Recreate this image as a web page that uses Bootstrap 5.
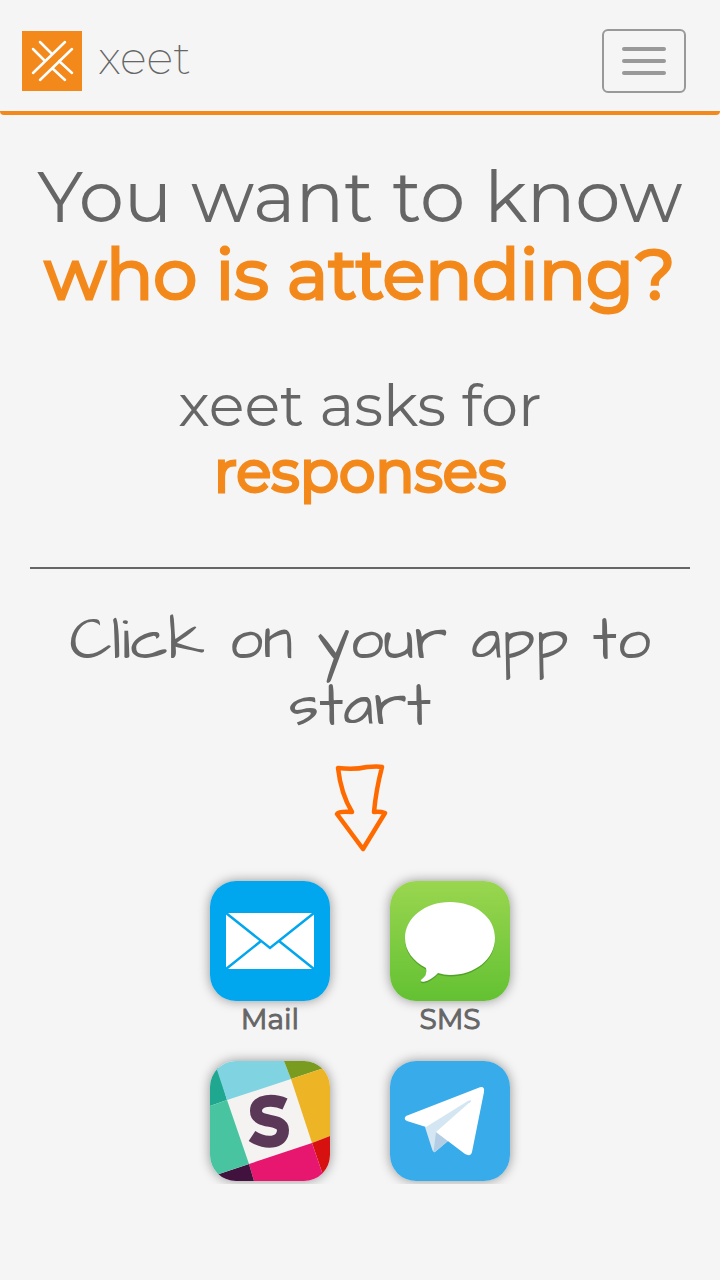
<!DOCTYPE html>
<html lang="en">
<head>
<meta charset="utf-8">
<meta name="viewport" content="width=device-width, initial-scale=1">
<title>xeet</title>
<link href="https://cdn.jsdelivr.net/npm/bootstrap@5.3.0/dist/css/bootstrap.min.css" rel="stylesheet">
<style>
  body { background: #f5f5f5; color: #666; font-family: "Montserrat", "Inter", sans-serif; }
  .site-bar { border-bottom: 4px solid #f3881b; border-radius: 4px; padding: 29px 34px 18px 22px; }
  .brand-name { font-size: 45px; line-height: 54px; font-weight: 200; color: #666; }
  .menu-btn { width: 84px; height: 64px; border: 2px solid #999; border-radius: 6px; padding: 0; }
  .accent { color: #f3881b; -webkit-text-stroke: 3px #f3881b; }
  .headline { font-size: 72px; line-height: 77px; padding-top: 43px; }
  .headline .accent { font-size: 70px; }
  .subline { font-size: 59px; line-height: 66px; padding-top: 59px; }
  .subline .accent { font-size: 58px; }
  .rule { border-top: 2px solid #666; opacity: 1; margin: 62px 30px 39px; }
  .hand { font-family: "Architects Daughter", cursive; font-size: 60px; line-height: 66px; margin-bottom: 22px; }
  .apps { width: 360px; height: 332px; padding-top: 29px; overflow: hidden; }
  .app-link { width: 180px; height: 180px; color: #666; font-size: 28px; line-height: 36px; -webkit-text-stroke: 1px #666; }
  .app-link svg { border-radius: 26px; box-shadow: 0 0 12px rgba(0, 0, 0, .4); -webkit-text-stroke: 0; }
</style>
</head>
<body>
<nav class="navbar site-bar">
  <a class="navbar-brand d-flex align-items-start p-0 m-0" href="#">
    <svg class="me-3" width="60" height="60" viewBox="0 0 60 60" aria-hidden="true">
      <path fill="#f3881b" d="M0 0h60v60H0z"/>
      <path fill="none" stroke="#fff" stroke-width="2.5" stroke-linecap="round" d="M11 42 43 11M18 49 50 18M18 11 30 23M11 18 23 30M37 30 50 42M30 37 43 49"/>
    </svg>
    <span class="brand-name">xeet</span>
  </a>
  <button class="btn menu-btn d-flex align-items-center justify-content-center" type="button" aria-label="Menu">
    <svg width="44" height="28" viewBox="0 0 44 28" fill="#999" aria-hidden="true"><rect width="44" height="4" rx="2"/><rect y="12" width="44" height="4" rx="2"/><rect y="24" width="44" height="4" rx="2"/></svg>
  </button>
</nav>
<main class="text-center">
  <h1 class="headline fw-normal m-0">You want to know<br><span class="accent">who is attending?</span></h1>
  <h2 class="subline fw-normal m-0">xeet asks for<br><span class="accent">responses</span></h2>
  <hr class="rule">
  <p class="hand">Click on your app to<br>start</p>
  <svg class="d-block mx-auto" width="60" height="90" viewBox="0 0 60 90" fill="none" stroke="#ff6a00" stroke-linejoin="round" aria-hidden="true">
    <path stroke-width="4.5" d="M8 6Q24 8 37 5Q48 4 52 5Q46 28 44 50Q50 49 55 51L33 87 7 52Q9 49 22 50 11 32 8 6Z"/>
  </svg>
  <div class="apps d-flex flex-wrap mx-auto">
    <a class="app-link text-decoration-none" href="#">
      <svg class="d-block mx-auto" width="120" height="120" viewBox="0 0 120 120" aria-hidden="true"><path fill="#00a6ee" d="M0 0h120v120H0z"/><path fill="#fff" d="M16 32h88v56H16z"/><path fill="none" stroke="#00a6ee" stroke-width="2.5" d="M16 32 60 67 104 32M16 88 51 60M104 88 69 60"/></svg>
      Mail
    </a>
    <a class="app-link text-decoration-none" href="#">
      <svg class="d-block mx-auto" width="120" height="120" viewBox="0 0 120 120" aria-hidden="true"><defs><linearGradient id="green" x2="0" y2="1"><stop stop-color="#9ad650"/><stop offset="1" stop-color="#63c132"/></linearGradient></defs><path fill="url(#green)" d="M0 0h120v120H0z"/><path fill="#3d8b1e" opacity=".6" transform="translate(0 1.5)" d="M60 21C35 21 15 37 15 57 15 70 23 80 36 87Q38 94 31 99C29 102 39 102 48 92Q54 94 60 94C85 94 105 78 105 57S85 21 60 21Z"/><path fill="#fff" d="M60 21C35 21 15 37 15 57 15 70 23 80 36 87Q38 94 31 99C29 102 39 102 48 92Q54 94 60 94C85 94 105 78 105 57S85 21 60 21Z"/></svg>
      SMS
    </a>
    <a class="app-link text-decoration-none" href="#" aria-label="Slack">
      <svg class="d-block mx-auto" width="120" height="120" viewBox="0 0 120 120" aria-hidden="true">
        <path fill="#f5f3f1" d="M0 0h120v120H0z"/>
        <path fill="#20a78f" d="M0 0H6L17 39 0 45Z"/>
        <path fill="#80d3e1" d="M4 0H74L81 18 17 39Z"/>
        <path fill="#789b20" d="M74 0H120V5L81 18Z"/>
        <path fill="#edb525" d="M81 18 120 5V75L102 82Z"/>
        <path fill="#d7110f" d="M102 82 120 75V120H115Z"/>
        <path fill="#e7176f" d="M39 103 102 82 115 120H44Z"/>
        <path fill="#42123e" d="M0 116 39 103 44 120H0Z"/>
        <path fill="#48c5a0" d="M0 45 17 39 39 103 0 116Z"/>
        <path fill="none" stroke="#5b3858" stroke-width="12" d="M75 43C64 38 46 38 46 50C46 64 73 56 73 69C73 84 54 83 42 75"/>
      </svg>
    </a>
    <a class="app-link text-decoration-none" href="#" aria-label="Telegram">
      <svg class="d-block mx-auto" width="120" height="120" viewBox="0 0 120 120" aria-hidden="true"><path fill="#38acea" d="M0 0h120v120H0z"/><path fill="#d3e6f2" d="M35 66 82 37 58 80 45 91Q43 92 42 88Z"/><path fill="#b3cee4" d="M46 71 58 80 45 91Q43 91 44 87Z"/><path fill="#fff" d="M16 55 88 27Q95 24 94 31L82 91Q81 96 75 93L46 71 80 41Q82 38 78 40L36 66 17 60Q13 58 16 55Z"/></svg>
    </a>
  </div>
</main>
<script src="https://cdn.jsdelivr.net/npm/bootstrap@5.3.0/dist/js/bootstrap.bundle.min.js"></script>
</body>
</html>
